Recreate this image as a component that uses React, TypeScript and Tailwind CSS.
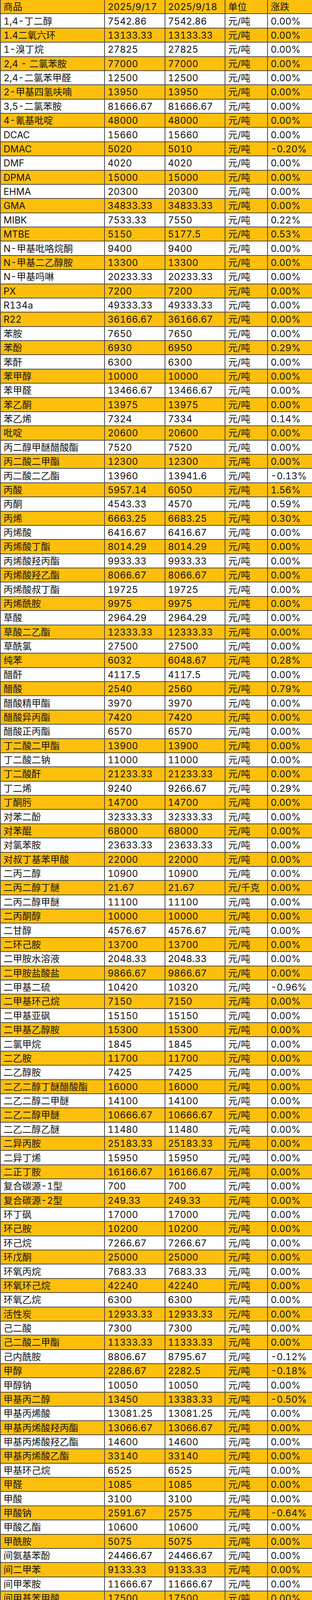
const rows: [string, string, string, string, string][] = [
  ["1,4-丁二醇", "7542.86", "7542.86", "元/吨", "0.00%"],
  ["1.4二氧六环", "13133.33", "13133.33", "元/吨", "0.00%"],
  ["1-溴丁烷", "27825", "27825", "元/吨", "0.00%"],
  ["2,4 - 二氯苯胺", "77000", "77000", "元/吨", "0.00%"],
  ["2,4-二氯苯甲醛", "12500", "12500", "元/吨", "0.00%"],
  ["2-甲基四氢呋喃", "13950", "13950", "元/吨", "0.00%"],
  ["3,5-二氯苯胺", "81666.67", "81666.67", "元/吨", "0.00%"],
  ["4-氰基吡啶", "48000", "48000", "元/吨", "0.00%"],
  ["DCAC", "15660", "15660", "元/吨", "0.00%"],
  ["DMAC", "5020", "5010", "元/吨", "-0.20%"],
  ["DMF", "4020", "4020", "元/吨", "0.00%"],
  ["DPMA", "15000", "15000", "元/吨", "0.00%"],
  ["EHMA", "20300", "20300", "元/吨", "0.00%"],
  ["GMA", "34833.33", "34833.33", "元/吨", "0.00%"],
  ["MIBK", "7533.33", "7550", "元/吨", "0.22%"],
  ["MTBE", "5150", "5177.5", "元/吨", "0.53%"],
  ["N-甲基吡咯烷酮", "9400", "9400", "元/吨", "0.00%"],
  ["N-甲基二乙醇胺", "13300", "13300", "元/吨", "0.00%"],
  ["N-甲基吗啉", "20233.33", "20233.33", "元/吨", "0.00%"],
  ["PX", "7200", "7200", "元/吨", "0.00%"],
  ["R134a", "49333.33", "49333.33", "元/吨", "0.00%"],
  ["R22", "36166.67", "36166.67", "元/吨", "0.00%"],
  ["苯胺", "7650", "7650", "元/吨", "0.00%"],
  ["苯酚", "6930", "6950", "元/吨", "0.29%"],
  ["苯酐", "6300", "6300", "元/吨", "0.00%"],
  ["苯甲醇", "10000", "10000", "元/吨", "0.00%"],
  ["苯甲醛", "13466.67", "13466.67", "元/吨", "0.00%"],
  ["苯乙酮", "13975", "13975", "元/吨", "0.00%"],
  ["苯乙烯", "7324", "7334", "元/吨", "0.14%"],
  ["吡啶", "20600", "20600", "元/吨", "0.00%"],
  ["丙二醇甲醚醋酸酯", "7520", "7520", "元/吨", "0.00%"],
  ["丙二酸二甲酯", "12300", "12300", "元/吨", "0.00%"],
  ["丙二酸二乙酯", "13960", "13941.6", "元/吨", "-0.13%"],
  ["丙酸", "5957.14", "6050", "元/吨", "1.56%"],
  ["丙酮", "4543.33", "4570", "元/吨", "0.59%"],
  ["丙烯", "6663.25", "6683.25", "元/吨", "0.30%"],
  ["丙烯酸", "6416.67", "6416.67", "元/吨", "0.00%"],
  ["丙烯酸丁酯", "8014.29", "8014.29", "元/吨", "0.00%"],
  ["丙烯酸羟丙酯", "9933.33", "9933.33", "元/吨", "0.00%"],
  ["丙烯酸羟乙酯", "8066.67", "8066.67", "元/吨", "0.00%"],
  ["丙烯酸叔丁酯", "19725", "19725", "元/吨", "0.00%"],
  ["丙烯酰胺", "9975", "9975", "元/吨", "0.00%"],
  ["草酸", "2964.29", "2964.29", "元/吨", "0.00%"],
  ["草酸二乙酯", "12333.33", "12333.33", "元/吨", "0.00%"],
  ["草酰氯", "27500", "27500", "元/吨", "0.00%"],
  ["纯苯", "6032", "6048.67", "元/吨", "0.28%"],
  ["醋酐", "4117.5", "4117.5", "元/吨", "0.00%"],
  ["醋酸", "2540", "2560", "元/吨", "0.79%"],
  ["醋酸精甲酯", "3970", "3970", "元/吨", "0.00%"],
  ["醋酸异丙酯", "7420", "7420", "元/吨", "0.00%"],
  ["醋酸正丙酯", "6570", "6570", "元/吨", "0.00%"],
  ["丁二酸二甲酯", "13900", "13900", "元/吨", "0.00%"],
  ["丁二酸二钠", "11000", "11000", "元/吨", "0.00%"],
  ["丁二酸酐", "21233.33", "21233.33", "元/吨", "0.00%"],
  ["丁二烯", "9240", "9266.67", "元/吨", "0.29%"],
  ["丁酮肟", "14700", "14700", "元/吨", "0.00%"],
  ["对苯二酚", "32333.33", "32333.33", "元/吨", "0.00%"],
  ["对苯醌", "68000", "68000", "元/吨", "0.00%"],
  ["对氯苯胺", "23633.33", "23633.33", "元/吨", "0.00%"],
  ["对叔丁基苯甲酸", "22000", "22000", "元/吨", "0.00%"],
  ["二丙二醇", "10900", "10900", "元/吨", "0.00%"],
  ["二丙二醇丁醚", "21.67", "21.67", "元/千克", "0.00%"],
  ["二丙二醇甲醚", "11100", "11100", "元/吨", "0.00%"],
  ["二丙酮醇", "10000", "10000", "元/吨", "0.00%"],
  ["二甘醇", "4576.67", "4576.67", "元/吨", "0.00%"],
  ["二环己胺", "13700", "13700", "元/吨", "0.00%"],
  ["二甲胺水溶液", "2048.33", "2048.33", "元/吨", "0.00%"],
  ["二甲胺盐酸盐", "9866.67", "9866.67", "元/吨", "0.00%"],
  ["二甲基二硫", "10420", "10320", "元/吨", "-0.96%"],
  ["二甲基环己烷", "7150", "7150", "元/吨", "0.00%"],
  ["二甲基亚砜", "15150", "15150", "元/吨", "0.00%"],
  ["二甲基乙醇胺", "15300", "15300", "元/吨", "0.00%"],
  ["二氯甲烷", "1845", "1845", "元/吨", "0.00%"],
  ["二乙胺", "11700", "11700", "元/吨", "0.00%"],
  ["二乙醇胺", "7425", "7425", "元/吨", "0.00%"],
  ["二乙二醇丁醚醋酸酯", "16000", "16000", "元/吨", "0.00%"],
  ["二乙二醇二甲醚", "14100", "14100", "元/吨", "0.00%"],
  ["二乙二醇甲醚", "10666.67", "10666.67", "元/吨", "0.00%"],
  ["二乙二醇乙醚", "11480", "11480", "元/吨", "0.00%"],
  ["二异丙胺", "25183.33", "25183.33", "元/吨", "0.00%"],
  ["二异丁烯", "15950", "15950", "元/吨", "0.00%"],
  ["二正丁胺", "16166.67", "16166.67", "元/吨", "0.00%"],
  ["复合碳源-1型", "700", "700", "元/吨", "0.00%"],
  ["复合碳源-2型", "249.33", "249.33", "元/吨", "0.00%"],
  ["环丁砜", "17000", "17000", "元/吨", "0.00%"],
  ["环己胺", "10200", "10200", "元/吨", "0.00%"],
  ["环己烷", "7266.67", "7266.67", "元/吨", "0.00%"],
  ["环戊酮", "25000", "25000", "元/吨", "0.00%"],
  ["环氧丙烷", "7683.33", "7683.33", "元/吨", "0.00%"],
  ["环氧环己烷", "42240", "42240", "元/吨", "0.00%"],
  ["环氧乙烷", "6300", "6300", "元/吨", "0.00%"],
  ["活性炭", "12933.33", "12933.33", "元/吨", "0.00%"],
  ["己二酸", "7300", "7300", "元/吨", "0.00%"],
  ["己二酸二甲酯", "11333.33", "11333.33", "元/吨", "0.00%"],
  ["己内酰胺", "8806.67", "8795.67", "元/吨", "-0.12%"],
  ["甲醇", "2286.67", "2282.5", "元/吨", "-0.18%"],
  ["甲醇钠", "10050", "10050", "元/吨", "0.00%"],
  ["甲基丙二醇", "13450", "13383.33", "元/吨", "-0.50%"],
  ["甲基丙烯酸", "13081.25", "13081.25", "元/吨", "0.00%"],
  ["甲基丙烯酸羟丙酯", "13066.67", "13066.67", "元/吨", "0.00%"],
  ["甲基丙烯酸羟乙酯", "14600", "14600", "元/吨", "0.00%"],
  ["甲基丙烯酸乙酯", "33140", "33140", "元/吨", "0.00%"],
  ["甲基环己烷", "6525", "6525", "元/吨", "0.00%"],
  ["甲醛", "1085", "1085", "元/吨", "0.00%"],
  ["甲酸", "3100", "3100", "元/吨", "0.00%"],
  ["甲酸钠", "2591.67", "2575", "元/吨", "-0.64%"],
  ["甲酸乙酯", "10600", "10600", "元/吨", "0.00%"],
  ["甲酰胺", "5075", "5075", "元/吨", "0.00%"],
  ["间氨基苯酚", "24466.67", "24466.67", "元/吨", "0.00%"],
  ["间二甲苯", "9133.33", "9133.33", "元/吨", "0.00%"],
  ["间甲苯胺", "11666.67", "11666.67", "元/吨", "0.00%"],
  ["间甲基苯甲酸", "17500", "17500", "元/吨", "0.00%"],
  ["间硝基甲苯", "11000", "11000", "元/吨", "0.00%"],
  ["精萘", "7233.33", "7233.33", "元/吨", "0.00%"],
  ["邻氨基苯酚", "28833.33", "28833.33", "元/吨", "0.00%"],
  ["邻二氯苯", "6925", "6925", "元/吨", "0.00%"],
  ["邻甲苯胺", "18175", "18175", "元/吨", "0.00%"],
  ["邻硝基甲苯", "11012.5", "11012.5", "元/吨", "0.00%"],
  ["硫脲", "10450", "10450", "元/吨", "0.00%"],
  ["硫酸二甲酯", "3033.33", "3033.33", "元/吨", "0.00%"],
  ["硫酸二乙酯", "13400", "13366.67", "元/吨", "-0.25%"],
  ["氯苯", "5050", "5050", "元/吨", "0.00%"],
  ["氯代碳酸乙烯酯", "6433.33", "6433.33", "元/吨", "0.00%"],
  ["氯代正丁烷", "12500", "12500", "元/吨", "0.00%"],
  ["氯化苯", "6900", "6900", "元/吨", "0.00%"],
  ["氯化苄", "7383.33", "7383.33", "元/吨", "0.00%"],
  ["吗啉", "13140", "13140", "元/吨", "0.00%"],
  ["尿素", "1665", "1672.5", "元/吨", "0.45%"],
  ["羟基乙酸", "13000", "13000", "元/吨", "0.00%"],
  ["三苯基膦", "50000", "50000", "元/吨", "0.00%"],
  ["三丙二醇甲醚", "13316.67", "13316.67", "元/吨", "0.00%"],
  ["三甘醇", "8420", "8420", "元/吨", "0.00%"],
  ["三甲苯", "6500", "6500", "元/吨", "0.00%"],
  ["三聚氰胺", "5650", "5637.5", "元/吨", "-0.22%"],
  ["三氯乙酸甲酯", "53000", "53000", "元/吨", "0.00%"],
  ["三羟甲基丙烷", "8616.67", "8616.67", "元/吨", "0.00%"],
  ["三乙胺", "13166.67", "13166.67", "元/吨", "0.00%"],
  ["三乙醇胺", "6300", "6300", "元/吨", "0.00%"],
  ["三乙醇胺硼酸酯", "11000", "11000", "元/吨", "0.00%"],
  ["三乙二醇", "9425", "9425", "元/吨", "0.00%"],
  ["三乙二醇丁醚", "11500", "11500", "元/吨", "0.00%"],
  ["三异丙醇胺", "9800", "9800", "元/吨", "0.00%"],
  ["十六酸(棕榈酸)", "13500", "13500", "元/吨", "0.00%"],
  ["叔丁胺", "33000", "33000", "元/吨", "0.00%"],
  ["叔丁醇", "7000", "7000", "元/吨", "0.00%"],
  ["叔丁醇钠", "16080", "16080", "元/吨", "0.00%"],
  ["叔十二硫醇", "54.33", "54.33", "元/千克", "0.00%"],
  ["双酚A", "8124", "8164", "元/吨", "0.49%"],
  ["双氰胺", "10966.67", "10966.67", "元/吨", "0.00%"],
  ["顺酐", "5625", "5625", "元/吨", "0.00%"],
  ["四甲基乙二胺", "32", "31.75", "元/千克", "-0.78%"],
  ["四氯乙烯", "3686.36", "3665", "元/吨", "-0.58%"],
  ["四氢呋喃", "11068", "11068", "元/吨", "0.00%"],
  ["碳酸二甲酯", "3850", "3850", "元/吨", "0.00%"],
  ["碳酸二乙酯", "8380", "8380", "元/吨", "0.00%"],
  ["盐酸羟胺", "10950", "10950", "元/吨", "0.00%"],
  ["液氨", "2206.67", "2206.67", "元/吨", "0.00%"],
  ["一甲胺水溶液", "1683.33", "1693.33", "元/吨", "0.59%"],
  ["一乙胺", "8800", "8800", "元/吨", "0.00%"],
  ["一异丙醇胺", "19800", "19800", "元/吨", "0.00%"],
  ["衣康酸", "10720", "10720", "元/吨", "0.00%"],
  ["乙醇", "5563.33", "5576.67", "元/吨", "0.24%"],
  ["乙二醇", "4458.33", "4458.33", "元/吨", "0.00%"],
  ["乙二醇丁醚", "8316.67", "8183.33", "元/吨", "-1.60%"],
  ["乙二醇二甲醚", "13550", "13550", "元/吨", "0.00%"],
  ["乙二醇二乙酸酯", "6125", "6125", "元/吨", "0.00%"],
  ["乙二醇甲醚", "7291.67", "7291.67", "元/吨", "0.00%"],
  ["乙二醇叔丁基醚", "10125", "10125", "元/吨", "0.00%"],
  ["乙二醇乙醚醋酸酯", "9900", "9900", "元/吨", "0.00%"],
  ["乙二醛水溶液", "3883.33", "3883.33", "元/吨", "0.00%"],
  ["乙酰丙酮", "15262.5", "15262.5", "元/吨", "0.00%"],
  ["乙酰乙酸甲酯", "8920", "8920", "元/吨", "0.00%"],
  ["乙酰乙酸乙酯", "9625", "9625", "元/吨", "0.00%"],
  ["异丙醇", "5691.66", "5683.34", "元/吨", "-0.15%"],
  ["异丁醛", "5583.33", "5583.33", "元/吨", "0.00%"],
  ["异丁酸", "8566.67", "8566.67", "元/吨", "0.00%"],
  ["异丁酰氯", "16500", "16500", "元/吨", "0.00%"],
  ["异氟尔酮", "11950", "11950", "元/吨", "0.00%"],
  ["异辛醇", "7016.67", "7016.67", "元/吨", "0.00%"],
  ["异辛酸", "11700", "11700", "元/吨", "0.00%"],
  ["异辛酸钠", "24066.67", "24066.67", "元/吨", "0.00%"],
  ["油酸", "7900", "7900", "元/吨", "0.00%"],
  ["油酸甲酯", "12700", "12700", "元/吨", "0.00%"],
  ["正丙醇", "7000", "7050", "元/吨", "0.71%"],
  ["正丙醛", "7387.5", "7387.5", "元/吨", "0.00%"],
  ["正丁醇(工业级)", "5916.67", "5916.67", "元/吨", "0.00%"],
  ["正庚烷", "14740", "14840", "元/吨", "0.68%"],
  ["正己烷", "7800", "7800", "元/吨", "0.00%"],
  ["正戊醇", "21333.33", "21333.33", "元/吨", "0.00%"],
  ["正辛醇", "25833.33", "25833.33", "元/吨", "0.00%"],
  ["仲丁醇", "11000", "11000", "元/吨", "0.00%"],
]

function Row({ cells, orange }: { cells: string[]; orange: boolean }) {
  return (
    <div
      className={`grid h-[36.39px] shrink-0 grid-cols-[269px_154.5px_154.5px_109px_113px] border-b-2 border-[#4a4a4a] ${
        orange ? "bg-[#fdbf0c]" : "bg-white"
      }`}
    >
      {cells.map((c, i) => (
        <div
          key={i}
          className={`flex items-center overflow-hidden whitespace-nowrap pl-[7px] pt-[2px] ${
            i === 0 ? "border-l-2 border-r-2 border-[#4a4a4a]" : i < 4 ? "border-r-2 border-[#4a4a4a]" : ""
          }`}
        >
          {c}
        </div>
      ))}
    </div>
  )
}

export default function App() {
  return (
    <div
      className="relative flex h-[6990px] w-[800px] flex-col overflow-hidden bg-white text-[24px] leading-none text-[#151515] tabular-nums"
      style={{ fontFamily: "Inter, 'Noto Sans CJK SC', sans-serif" }}
    >
      <Row cells={["商品", "2025/9/17", "2025/9/18", "单位", "涨跌"]} orange />
      {rows.map((r, i) => (
        <Row key={r[0]} cells={r} orange={i % 2 === 1} />
      ))}
      <span className="absolute right-[34px] bottom-[24px] text-[13px] text-[#b9c1cc]">@硕纳化工</span>
    </div>
  )
}
